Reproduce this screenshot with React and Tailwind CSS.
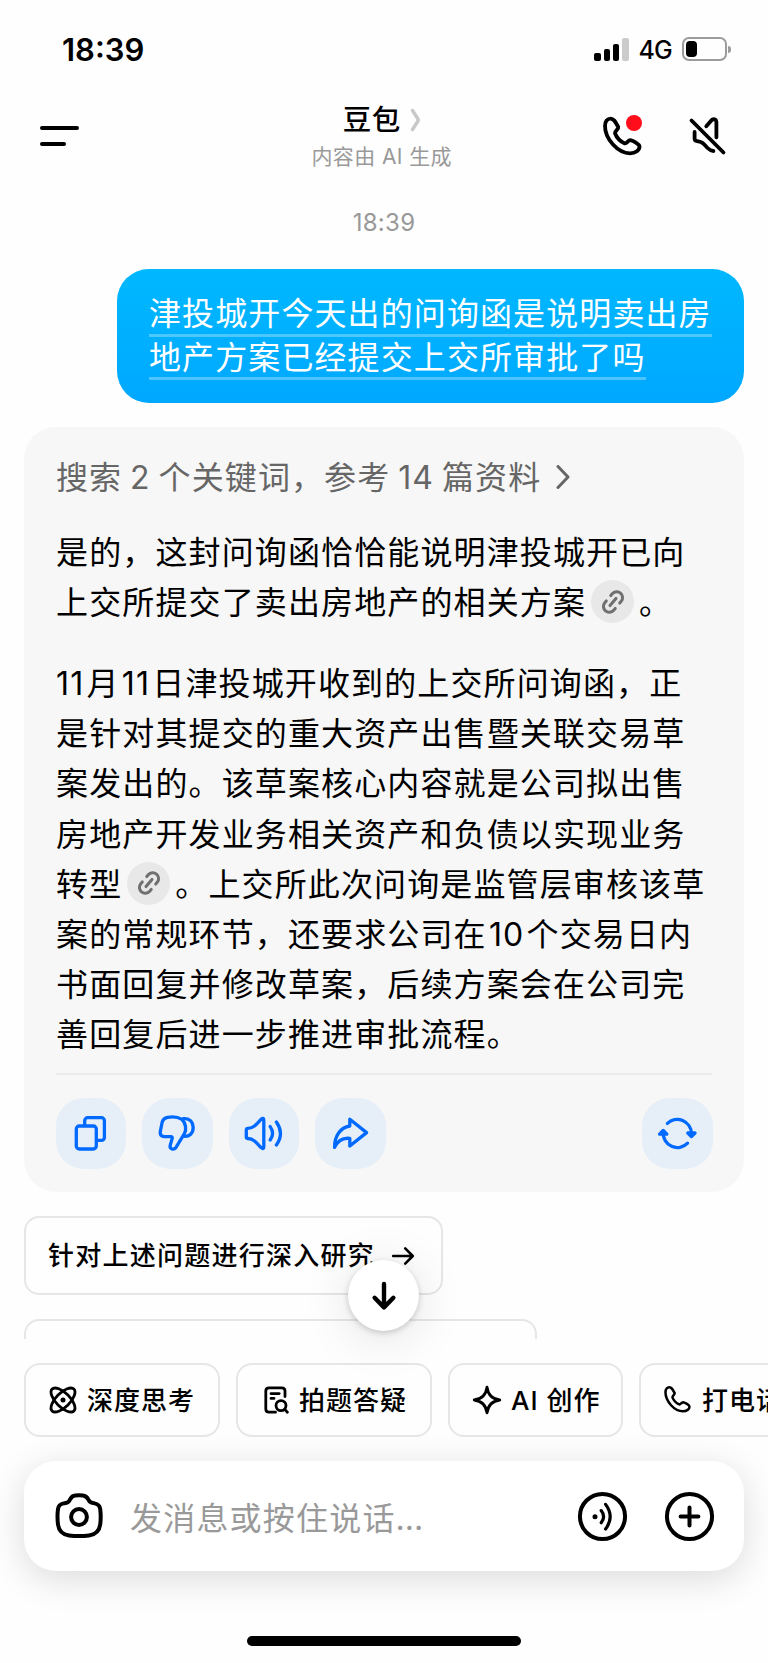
import { Link2 } from 'lucide-react'

const PHONE_PATH =
  'M5 12C5 7 7.4 4.6 10.6 4.6C13.6 4.6 15 7 18.2 13C18.8 15.2 14.8 16.8 15 19.2C16.6 23.4 20.6 27.6 24.8 29.4C27 29.8 28 26 30.4 26.2C33.4 26.8 39 30 39.5 32.4C39.8 36 35.5 39.3 30 39.3C18 39.3 5 25 5 12Z'

// '@' marks a source link inside the text
const answer = [
  ['是的，这封问询函恰恰能说明津投城开已向', '上交所提交了卖出房地产的相关方案@。'],
  [
    '11月11日津投城开收到的上交所问询函，正',
    '是针对其提交的重大资产出售暨关联交易草',
    '案发出的。该草案核心内容就是公司拟出售',
    '房地产开发业务相关资产和负债以实现业务',
    '转型@。上交所此次问询是监管层审核该草',
    '案的常规环节，还要求公司在10个交易日内',
    '书面回复并修改草案，后续方案会在公司完',
    '善回复后进一步推进审批流程。',
  ],
]

function Svg({ size, stroke = 3.3, className = '', children }) {
  return (
    <svg
      width={size}
      height={size}
      viewBox={`0 0 ${size} ${size}`}
      fill="none"
      stroke="currentColor"
      strokeWidth={stroke}
      strokeLinecap="round"
      strokeLinejoin="round"
      className={`shrink-0 ${className}`}
    >
      {children}
    </svg>
  )
}

function StatusBar() {
  return (
    <div className="flex h-[98px] items-center justify-between pl-[62px] pr-[37px]">
      <span className="text-[31px] font-semibold leading-none">18:39</span>
      <div className="flex items-center">
        <div className="mr-[10px] flex h-[23px] items-end gap-[3px]">
          <i className="h-2 w-[6.3px] rounded-[2px] bg-black" />
          <i className="h-3 w-[6.3px] rounded-[2px] bg-black" />
          <i className="h-[17px] w-[6.3px] rounded-[2px] bg-black" />
          <i className="h-[23px] w-[6.3px] rounded-[2px] bg-[#cbcbcb]" />
        </div>
        <span className="mr-[10px] pt-[2px] text-[25px] font-medium leading-none tracking-[-0.8px]">4G</span>
        <div className="h-[24px] w-[45px] rounded-[7px] border-2 border-[#9c9c9c] p-[2px]">
          <div className="h-4 w-[11px] rounded-[4px] bg-black" />
        </div>
        <i className="ml-[1px] h-[7px] w-[3px] rounded-r-full bg-[#9c9c9c]" />
      </div>
    </div>
  )
}

function Header() {
  return (
    <div className="flex h-[76px] items-center justify-between pl-[39.5px] pr-[38px]">
      <div className="flex w-[124px] flex-col gap-3">
        <i className="h-1 w-[39px] rounded-full bg-black" />
        <i className="h-1 w-[26px] rounded-full bg-black" />
      </div>
      <div className="mt-[4px] flex flex-col items-center">
        <div className="flex h-[38px] items-center gap-[9px]">
          <h1 className="text-[28.5px] font-medium tracking-[0.5px]">豆包</h1>
          <svg width="11" height="24" viewBox="0 0 11 24" fill="none" stroke="#c8c8c8" strokeWidth="3.4" strokeLinecap="round" strokeLinejoin="round">
            <path d="M2.5 2.5L8 11C8.4 11.7 8.4 12.3 8 13L2.5 21.5" />
          </svg>
        </div>
        <p className="h-9 whitespace-nowrap text-[21px] leading-9 tracking-[0.4px] text-[#999]">内容由 AI 生成</p>
      </div>
      <div className="flex w-[130px] justify-between">
        <div className="relative">
          <Svg size={44} stroke={3.8}>
            <path d={PHONE_PATH} />
          </Svg>
          <i className="absolute left-[26px] top-[1px] h-4 w-4 rounded-full bg-[#ff0d1a]" />
        </div>
        <Svg size={44} stroke={3.8}>
          <path d="M5.5 6.5L37.5 38.5M20.3 12.2L25.3 6.4C27.2 4.4 30.2 5 30.4 8.2V23.3M8.6 18V24.6Q8.6 27 11 27.1C14.2 27.4 16 28 18 30.2L21.6 34Q24.6 37 27.4 37" />
        </Svg>
      </div>
    </div>
  )
}

function LinkChip() {
  return (
    <span className="mx-[5px] mb-[3px] flex h-[43px] w-[43px] shrink-0 items-center justify-center rounded-full bg-[#e8e8e8] text-[#707070]">
      <Link2 size={28} strokeWidth={2.6} className="-rotate-[50deg]" />
    </span>
  )
}

function AnswerLine({ text }) {
  const parts = text.split(/(@|\d+)/).filter(Boolean)
  return (
    <div className="flex h-[50.2px] items-center whitespace-nowrap">
      {parts.map((part, i) => {
        if (part === '@') return <LinkChip key={i} />
        if (/\d/.test(part)) return <span key={i} className="mx-[2.2px] first:ml-0">{part}</span>
        return <span key={i}>{part}</span>
      })}
    </div>
  )
}

function ActionButton({ children }) {
  return (
    <button className="flex h-[70.5px] w-[70.5px] items-center justify-center rounded-[28px] bg-[#e6eff7] pb-[2px] pr-[1px] text-[#0069ff]">
      <Svg size={40} stroke={3.3}>{children}</Svg>
    </button>
  )
}

function Actions() {
  return (
    <div className="-mx-[0.5px] mt-[23px] flex gap-4">
      <ActionButton>
        <rect x="6.3" y="13" width="20" height="23" rx="3" />
        <path d="M14.7 12V7.7a3 3 0 0 1 3-3H31.4a3 3 0 0 1 3 3V24.4a3 3 0 0 1-3 3H28" />
      </ActionButton>
      <ActionButton>
        <path d="M10.5 4.4C15 3.4 21 4 25 6.4C29 10 29.6 17 27.4 20.6L19 34.4C16.6 37.6 12.4 36 13.2 32.4L15.2 25.4Q15.6 23.7 13.8 23.7H7.4Q3 23.4 3.2 19L5.2 9Q6.2 5.4 10.5 4.4Z" />
        <path d="M26.4 5.7C33 4.8 36.2 9.6 36.2 14.6C36.2 20 32.6 24 26.6 23.2" />
      </ActionButton>
      <ActionButton>
        <path d="M5 15.3C10 15.3 13 12 18 6.3Q20.8 4 20.8 7V34Q20.8 37 18 34.6C13 29 10 25.7 5 25.5Q3.3 25.5 3.3 24V17Q3.3 15.3 5 15.3Z" />
        <path d="M27.2 13.6Q32 20.3 27.2 27M33.4 9Q41.5 20.4 33.4 32" />
      </ActionButton>
      <ActionButton>
        <path d="M19.8 6.2L36.6 19.6L19.8 33V25.4C13 24.6 7.6 28 4.6 34.4C4.4 23 10.4 14.4 19.8 13Z" />
      </ActionButton>
      <div className="ml-auto">
        <ActionButton>
          <path d="M10.4 10.4A14.2 14.2 0 0 1 34.4 20.4M6.2 19.4A14.2 14.2 0 0 0 30.6 30.2" />
          <path d="M30.8 20H38L34.4 23.6ZM2.6 21.2H9.8L6.2 17.4Z" fill="currentColor" />
        </ActionButton>
      </div>
    </div>
  )
}

function Pill({ icon, label, className }) {
  return (
    <button className={`flex h-[74px] shrink-0 items-center gap-2 rounded-2xl border-2 border-[#e6e6e6] bg-[#fefefe] pl-[21px] text-[26px] font-medium tracking-[1px] whitespace-nowrap ${className}`}>
      {icon}
      <span>{label}</span>
    </button>
  )
}

function Pills() {
  return (
    <div className="mt-[24px] flex gap-4 pl-6">
      <Pill
        className="w-[196px]"
        label="深度思考"
        icon={
          <Svg size={32} stroke={2.8}>
            <ellipse cx="16" cy="16" rx="15.4" ry="7" transform="rotate(45 16 16)" />
            <ellipse cx="16" cy="16" rx="15.4" ry="7" transform="rotate(-45 16 16)" />
            <circle cx="16" cy="16" r="2.5" fill="currentColor" stroke="none" />
          </Svg>
        }
      />
      <Pill
        className="w-[196px]"
        label="拍题答疑"
        icon={
          <Svg size={32} stroke={2.8}>
            <path d="M26 12.5V7Q26 3.8 22.8 3.8H10Q6.8 3.8 6.8 7V25Q6.8 28.2 10 28.2H16.5M12 9.6H20.2M12 14.4H15" />
            <circle cx="22" cy="21.6" r="5" />
            <path d="M25.8 25.4L28.4 28.2" />
          </Svg>
        }
      />
      <Pill
        className="w-[175px] tracking-[0.3px]"
        label="AI 创作"
        icon={
          <Svg size={32} stroke={2.8}>
            <path d="M16 3.2C17 10.6 20.6 15 28.8 16C20.6 17 17 21.4 16 28.8C15 21.4 11.4 17 3.2 16C11.4 15 15 10.6 16 3.2Z" />
          </Svg>
        }
      />
      <Pill
        className="w-[196px]"
        label="打电话"
        icon={
          <svg width="32" height="32" viewBox="0 0 46 46" fill="none" stroke="currentColor" strokeWidth="3.6" strokeLinejoin="round" className="shrink-0">
            <path d={PHONE_PATH} />
          </svg>
        }
      />
    </div>
  )
}

function Composer() {
  return (
    <div className="mx-6 mt-6 flex h-[110px] items-center rounded-[32px] bg-white pl-[29px] pr-[28px] shadow-[0_8px_36px_rgba(0,0,0,0.14)]">
      <Svg size={52} stroke={4}>
        <path d="M16 11.2C18.2 8 18 6 22 5.5Q26 4.9 30 5.5C34 6 34.4 8 36.2 11C37.4 12.6 38.4 12.8 41.6 13.4Q46.6 14.4 47.2 19Q48.2 26.5 47.2 34.5C46.2 42 42 44.6 36 45.4Q26 46.6 16 45.4C10 44.6 6 42 5 34.5Q4 26.5 5 19Q5.6 14.4 10.6 13.4C13.6 12.8 14.8 12.8 16 11.2Z" />
        <circle cx="26" cy="27" r="7.9" />
      </Svg>
      <span className="ml-[25px] pt-[6px] text-[32px] tracking-[1.2px] text-[#999]">
        发消息或按住说话<span className="tracking-[0px]">...</span>
      </span>
      <div className="ml-auto flex gap-[34px]">
        <Svg size={53} stroke={4}>
          <circle cx="26.5" cy="26.5" r="22.6" />
          <circle cx="19" cy="26.7" r="2.5" fill="currentColor" stroke="none" />
          <path strokeWidth="3.2" d="M25.2 20.6Q30 26.7 25.2 32.8M29.6 14.4Q38.8 26.7 29.6 39" />
        </Svg>
        <Svg size={53} stroke={4}>
          <circle cx="26.5" cy="26.5" r="22.6" />
          <path d="M26.5 17.6V35.4M17.6 26.5H35.4" />
        </Svg>
      </div>
    </div>
  )
}

export default function App() {
  return (
    <div className="flex h-[1663px] w-[768px] flex-col overflow-hidden bg-[#fefefe] font-['Inter','Noto_Sans_CJK_SC',sans-serif] text-black" lang="zh-CN">
      <StatusBar />
      <Header />
      <p className="h-[95px] text-center text-[24px] leading-[97px] tracking-[0.3px] text-[#999]">18:39</p>

      <div className="ml-[117px] mr-6 h-[134px] rounded-[32px] bg-linear-to-b from-[#00b8ff] to-[#00a8ff] pl-8 pt-6 text-[32px] tracking-[1.1px] text-white">
        <p className="h-[43.5px] w-fit whitespace-nowrap border-b-[3px] border-white/30 leading-[42.5px]">津投城开今天出的问询函是说明卖出房</p>
        <p className="h-[43.5px] w-fit whitespace-nowrap border-b-[3px] border-white/30 leading-[42.5px]">地产方案已经提交上交所审批了吗</p>
      </div>

      <div className="mx-6 mt-6 h-[765px] rounded-[32px] bg-[#f7f7f7] px-8 pt-[25px]">
        <div className="flex h-[50px] items-center gap-[14px] text-[32px] tracking-[1.1px] text-[#666]">
          <span className="pt-[1px] [word-spacing:-2.2px]">搜索 2 个关键词，参考 14 篇资料</span>
          <Svg size={24} stroke={3}>
            <path d="M3 1.5L13 12L3 22.5" />
          </Svg>
        </div>
        <div className="mt-[26px] text-[32px] tracking-[1.13px]">
          {answer.map((lines, i) => (
            <div key={i} className="mb-[30.5px] last:mb-0">
              {lines.map((line) => (
                <AnswerLine key={line} text={line} />
              ))}
            </div>
          ))}
        </div>
        <div className="mt-[13px] h-[2px] bg-[#ebebeb]" />
        <Actions />
      </div>

      <div className="relative mt-6 h-[123px] shrink-0 pl-6">
        <div className="flex h-[123px] flex-col gap-6 overflow-hidden">
          <div className="flex h-[79px] w-[419px] shrink-0 items-center rounded-[15px] border-2 border-[#e6e6e6] pl-[22px] text-[26px] font-medium tracking-[1.25px]">
            <span>针对上述问题进行深入研究</span>
            <Svg size={26} stroke={2.6} className="ml-[15px]">
              <path d="M3.2 13H22.4M15.2 5.4L22.8 13L15.2 20.6" />
            </Svg>
          </div>
          <div className="h-[79px] w-[513px] shrink-0 rounded-[15px] border-2 border-[#e6e6e6]" />
        </div>
        <button className="absolute left-[348px] top-[44px] z-10 flex h-[71px] w-[71px] items-center justify-center rounded-full bg-white shadow-[0_2px_6px_rgba(0,0,0,0.18),0_6px_50px_rgba(0,0,0,0.12)]">
          <Svg size={36} stroke={4.4}>
            <path d="M18 6V29M8.6 19.8L18 29.4L27.4 19.8" />
          </Svg>
        </button>
      </div>

      <Pills />
      <Composer />
      <div className="mx-auto mt-[65px] h-[10px] w-[274px] shrink-0 rounded-full bg-black" />
    </div>
  )
}
